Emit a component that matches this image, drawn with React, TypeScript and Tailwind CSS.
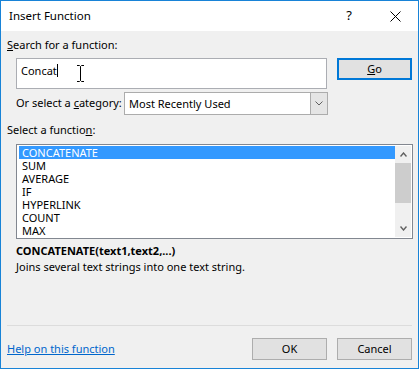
const functions = ["CONCATENATE", "SUM", "AVERAGE", "IF", "HYPERLINK", "COUNT", "MAX"];

function Button({ children, focused }: { children: React.ReactNode; focused?: boolean }) {
  return (
    <div
      className={
        "flex h-[22px] w-[75px] items-center justify-center bg-[#e1e1e1] text-black " +
        (focused ? "border-2 border-[#0078d7]" : "border border-[#adadad]")
      }
    >
      {children}
    </div>
  );
}

export default function App() {
  return (
    <div
      className="flex h-[369px] w-[419px] flex-col border border-[#1883d7] bg-[#f0f0f0] text-[11px] text-black"
      style={{ fontFamily: '"Noto Sans", "Segoe UI", sans-serif' }}
    >
      {/* title bar */}
      <div className="flex h-[30px] shrink-0 items-center bg-white pl-[8px]">
        <span className="flex-1 text-[11.5px]">Insert Function</span>
        <span className="w-[46px] text-center text-[13px]">?</span>
        <div className="flex w-[46px] items-center justify-center">
          <svg width="11" height="11" viewBox="0 0 11 11" stroke="#000" strokeWidth="1">
            <path d="M0.5 0.5 L10.5 10.5 M10.5 0.5 L0.5 10.5" />
          </svg>
        </div>
      </div>

      <div className="flex flex-1 flex-col px-[6px] pt-[6px]">
        <div className="leading-[16px]">
          <span className="underline">S</span>earch for a function:
        </div>

        <div className="mt-[5px] flex gap-[10px] pl-[9px]">
          <div className="relative h-[31px] w-[311px] border border-[#abadb3] bg-white px-[4px] pt-[3px]">
            <span>Concat</span>
            <span className="inline-block h-[13px] w-px translate-y-[2px] bg-black" />
            <svg className="absolute left-[60px] top-[6px]" width="7" height="17" viewBox="0 0 7 17" stroke="#000" strokeWidth="1" fill="none">
              <path d="M0 0.5 H2.5 L3.5 1.5 L4.5 0.5 H7 M3.5 1.5 V15.5 M0 16.5 H2.5 L3.5 15.5 L4.5 16.5 H7" />
            </svg>
          </div>
          <Button focused>
            <span className="underline">G</span>o
          </Button>
        </div>

        <div className="mt-[3px] flex items-center pl-[9px]">
          <span className="w-[108px]">
            Or select a <span className="underline">c</span>ategory:
          </span>
          <div className="flex h-[23px] w-[204px] items-stretch border border-[#acacac] bg-white">
            <span className="flex-1 pl-[4px] leading-[21px]">Most Recently Used</span>
            <div className="flex w-[17px] items-center justify-center border-l border-[#acacac] bg-[#e5e5e5]">
              <svg width="8" height="5" viewBox="0 0 8 5" stroke="#606060" strokeWidth="1" fill="none">
                <path d="M0.5 0.5 L4 4 L7.5 0.5" />
              </svg>
            </div>
          </div>
        </div>

        <div className="mt-[7px] leading-[16px]">
          Select a functio<span className="underline">n</span>:
        </div>

        <div className="ml-[9px] mt-[6px] flex h-[95px] w-[397px] border border-[#828790] bg-white p-px">
          <div className="flex flex-1 flex-col pl-px">
            {functions.map((f, i) => (
              <div
                key={f}
                className={"h-[13px] overflow-hidden pl-[3px] leading-[13px] " + (i === 0 ? "bg-[#3399ff] text-white" : "")}
              >
                {f}
              </div>
            ))}
          </div>
          <div className="flex w-[16px] flex-col items-center bg-[#f0f0f0]">
            <div className="flex h-[17px] items-center">
              <svg width="7" height="5" viewBox="0 0 7 5" stroke="#606060" strokeWidth="1.4" fill="none">
                <path d="M0.5 4.5 L3.5 1 L6.5 4.5" />
              </svg>
            </div>
            <div className="h-[40px] w-full bg-[#cdcdcd]" />
            <div className="flex-1" />
            <div className="flex h-[17px] items-center">
              <svg width="7" height="5" viewBox="0 0 7 5" stroke="#606060" strokeWidth="1.4" fill="none">
                <path d="M0.5 0.5 L3.5 4 L6.5 0.5" />
              </svg>
            </div>
          </div>
        </div>

        <div className="ml-[9px] mt-[4px] font-bold leading-[16px]">CONCATENATE(text1,text2,...)</div>
        <div className="ml-[9px] leading-[16px]">Joins several text strings into one text string.</div>

        <div className="mt-auto border-t border-[#dcdcdc]" />
        <div className="flex items-center justify-between pb-[8px] pt-[12px]">
          <span className="text-[#0066cc] underline">Help on this function</span>
          <div className="flex gap-[10px]">
            <Button>OK</Button>
            <Button>Cancel</Button>
          </div>
        </div>
      </div>
    </div>
  );
}
